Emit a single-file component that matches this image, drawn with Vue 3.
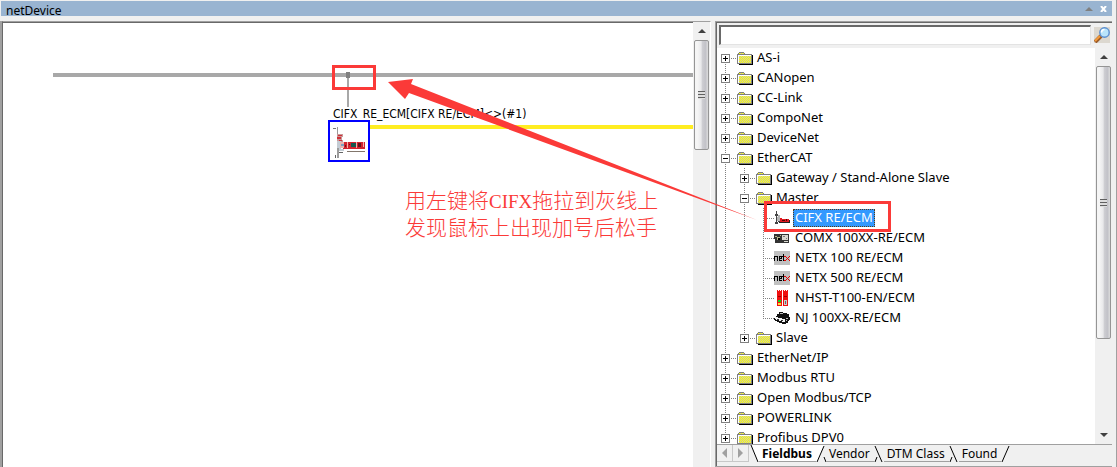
<script setup>
import { ref } from 'vue'

const rows = [
  { level: 0, label: 'AS-i', box: '+', first: true },
  { level: 0, label: 'CANopen', box: '+' },
  { level: 0, label: 'CC-Link', box: '+' },
  { level: 0, label: 'CompoNet', box: '+' },
  { level: 0, label: 'DeviceNet', box: '+' },
  { level: 0, label: 'EtherCAT', box: '-' },
  { level: 1, label: 'Gateway / Stand-Alone Slave', box: '+' },
  { level: 1, label: 'Master', box: '-' },
  { level: 2, label: 'CIFX RE/ECM', icon: 'card' },
  { level: 2, label: 'COMX 100XX-RE/ECM', icon: 'module' },
  { level: 2, label: 'NETX 100 RE/ECM', icon: 'netx' },
  { level: 2, label: 'NETX 500 RE/ECM', icon: 'netx' },
  { level: 2, label: 'NHST-T100-EN/ECM', icon: 'host' },
  { level: 2, label: 'NJ 100XX-RE/ECM', icon: 'box', last: true },
  { level: 1, label: 'Slave', box: '+', last: true },
  { level: 0, label: 'EtherNet/IP', box: '+' },
  { level: 0, label: 'Modbus RTU', box: '+' },
  { level: 0, label: 'Open Modbus/TCP', box: '+' },
  { level: 0, label: 'POWERLINK', box: '+' },
  { level: 0, label: 'Profibus DPV0', box: '+' }
]
const selected = ref('CIFX RE/ECM')
const query = ref('')
const tabs = ['Fieldbus', 'Vendor', 'DTM Class', 'Found']
const edges = ['M1 17L8 1M8 12L10 17', 'M1 1L8 17M1 17L3 12', 'M1 1L8 17M1 17L3 12', 'M1 17L8 1']
const activeTab = ref('Fieldbus')
</script>

<template>
  <div class="window">
    <header class="titlebar">
      <h1>netDevice</h1>
      <button class="win-btn" aria-label="Collapse">
        <svg width="8" height="4" viewBox="0 0 8 4"><path d="M0 4L4 0L8 4Z" fill="#808080" /></svg>
      </button>
      <button class="win-btn close" aria-label="Close">
        <svg width="7" height="6" viewBox="0 0 7 6"><path d="M1 0L6 6M6 0L1 6" stroke="#fff" stroke-width="2" /></svg>
      </button>
    </header>

    <div class="panes">
      <main class="network">
        <div class="canvas">
          <div class="bus"></div>
          <div class="stem"></div>
          <div class="joint"></div>
          <div class="ecat-line"></div>
          <span class="node-label">CIFX_RE_ECM[CIFX RE/ECM]&lt;&gt;(#1)</span>
          <div class="node">
            <svg width="34" height="34" viewBox="0 0 34 34" shape-rendering="crispEdges">
              <path d="M1 4h3" stroke="#777" fill="none" />
              <path d="M5 3h1v10H5z" fill="#999" />
              <path d="M5 10h6v3h-1v3h1v3H5z" fill="#c99a9a" />
              <path d="M6 11h4v1H6zM5 13h4v2H5zM7 16h3v1H7z" fill="#d03038" />
              <path d="M5 17h4v8h3v2H5z" fill="#c4ccd4" />
              <path d="M11 18h22v7H11z" fill="#d3222d" />
              <path d="M8 18h4v6H8z" fill="#e8b4b0" />
              <path d="M9 20h3v2H9z" fill="#78a0c0" />
              <path d="M19 19h5v4h-5z" fill="#16574d" />
              <path d="M26 19h3v4h-3z" fill="#65141a" />
              <path d="M15 18h1v6h-1zM31 18h1v5h-1zM24 18h1v6h-1z" fill="#f2b0aa" />
              <path d="M17 20h1v1h-1zM13 21h1v2h-1z" fill="#701018" />
              <path d="M15 27h18v1H15z" fill="#82766c" />
              <path d="M5 24h2v10H5z" fill="#9c9c9c" />
              <path d="M7 28h4v1H7zM3 31h1v3H3z" fill="#666" />
            </svg>
          </div>
          <div class="drop-mark"></div>
          <p class="note">用左键将<span>CIFX</span>拖拉到灰线上<br>发现鼠标上出现加号后松手</p>
        </div>
        <div class="scrollbar">
          <button class="sb-btn" aria-label="Scroll up"><i class="up"></i></button>
          <div class="thumb short"><i></i></div>
        </div>
      </main>

      <aside class="catalog">
        <form class="search" @submit.prevent>
          <input v-model="query" type="text" aria-label="Search devices">
          <button aria-label="Search">
            <svg width="16" height="16" viewBox="0 0 16 16">
              <path d="M1 15L7 9" stroke="#9a5a28" stroke-width="4" />
              <path d="M1 14L6 9" stroke="#f39a3c" stroke-width="2" />
              <circle cx="10.500" cy="5.500" r="4.700" fill="#b9e4fb" stroke="#5a8ed0" stroke-width="1.400" />
              <path d="M7.500 5.500a3 3 0 0 1 3-3" stroke="#fff" stroke-width="1.600" fill="none" />
            </svg>
          </button>
        </form>

        <div class="tree-wrap">
          <ul class="tree">
            <li v-for="row in rows" :key="row.label" class="row">
              <span v-for="n in row.level" :key="n" class="cell line"></span>
              <span class="cell branch" :class="{ line: !row.last, above: !row.first, first: row.first }">
                <button v-if="row.box" class="toggle" :class="{ plus: row.box === '+' }" :aria-label="'Toggle ' + row.label"></button>
              </span>
              <svg v-if="row.box" class="folder" width="16" height="13" viewBox="0 0 16 13" shape-rendering="crispEdges">
                <defs>
                  <pattern id="weave" width="2" height="2" patternUnits="userSpaceOnUse">
                    <path d="M0 0h2v2H0z" fill="#c8c8b4" />
                    <path d="M1 0h1v1H1zM0 1h1v1H0z" fill="#ff0" />
                  </pattern>
                </defs>
                <path d="M2 12h13V3h1v10H2z" fill="#000" />
                <path d="M0 2h1V1h1V0h5v1h1v1h7v10H0z" fill="#808080" />
                <path d="M1 3h13v8H1z" fill="#fff" />
                <path d="M2 1h5v1H2z" fill="url(#weave)" />
                <path d="M2 4h12v7H2z" fill="url(#weave)" />
              </svg>
              <svg v-else class="leaf-icon" width="16" height="16" viewBox="0 0 16 16" shape-rendering="crispEdges">
                <g v-if="row.icon === 'card'">
                  <path d="M2 1h1v4H2zM1 4h3v2H1zM2 6h1v6H2zM1 12h3v2H1zM4 11h2v1H4z" fill="#444" />
                  <path d="M4 5h2v2H4zM3 7h3v4H3z" fill="#b4b4b4" />
                  <path d="M6 8h2v1h7v3H6z" fill="#e01820" />
                  <path d="M8 10h3v1H8zM12 9h1v2h-1z" fill="#500" />
                  <path d="M5 12h11v1H5zM15 10h1v2h-1z" fill="#222" />
                </g>
                <g v-else-if="row.icon === 'module'">
                  <path d="M0 4h15v9H1V9H0z" fill="#333" />
                  <path d="M8 5h6v5H8zM10 11h4v1h-4z" fill="#d8d8d0" />
                  <path d="M1 6h2v1H1zM3 7h3v3H3zM6 5h1v1H6z" fill="#b8ba8a" />
                  <path d="M4 8h2v2H4z" fill="#000" />
                  <path d="M9 6h2v1H9zM12 8h1v1h-1z" fill="#777" />
                </g>
                <g v-else-if="row.icon === 'netx'">
                  <path d="M0 1h16v14H0z" fill="#c0c0c0" />
                  <path d="M0 6h1v5H0zM1 6h2v1H1zM3 6h1v5H3zM5 6h3v1H5zM5 7h1v4H5zM5 8h3v1H5zM7 7h1v1H7zM6 10h2v1H6zM9 4h1v7H9zM8 6h1v1H8z" fill="#000" />
                  <path d="M10 6h2v1h-2zM10 10h2v1h-2zM12 7h1v1h-1zM12 9h1v1h-1zM13 8h1v1h-1zM14 7h1v1h-1zM14 9h1v1h-1zM15 6h1v1h-1zM15 10h1v1h-1z" fill="#e00000" />
                </g>
                <g v-else-if="row.icon === 'host'">
                  <path d="M3 0h1v1h1V0h1v1h1V0h1v16H3zM9 0h1v1h1V0h1v1h1V0h1v16H9z" fill="#f01010" />
                  <path d="M4 6h3v1H4zM10 6h3v1h-3z" fill="#a00000" />
                  <path d="M4 10h3v2H4z" fill="#00d820" />
                  <path d="M4 13h3v2H4z" fill="#f4e030" />
                  <path d="M10 10h3v5h-3z" fill="#ccc" />
                  <path d="M11 11h1v3h-1z" fill="#666" />
                </g>
                <g v-else>
                  <path d="M5 2h4v1h4v1h2v3h1v3h-1v1h-1v2h-2v1H8v-1H5v-1H3v-1H1v-1H0V8h2V6h1V4h2z" fill="#111" />
                  <path d="M2 7h2v1h4v1h3v3H8v-1H5v-1H2V9H1V8h1z" fill="#f4f4f4" />
                  <path d="M3 9h2v1H3zM7 10h2v1H7z" fill="#333" />
                  <path d="M12 8h2v1h-2zM12 10h1v1h-1zM6 3h3v1H6z" fill="#bbb" />
                </g>
              </svg>
              <button class="label" :class="{ selected: selected === row.label }" @click="selected = row.label">{{ row.label }}</button>
            </li>
          </ul>
          <div class="scrollbar">
            <button class="sb-btn" aria-label="Scroll up"><i class="up"></i></button>
            <div class="thumb"><i></i></div>
            <button class="sb-btn end" aria-label="Scroll down"><i class="down"></i></button>
          </div>
        </div>

        <nav class="tabs">
          <button class="step" aria-label="Previous tab">
            <svg width="5" height="10" viewBox="0 0 5 10"><path d="M5 0V10L0 5Z" fill="#a0a0a0" /></svg>
          </button>
          <button class="step" aria-label="Next tab">
            <svg width="5" height="10" viewBox="0 0 5 10"><path d="M0 0V10L5 5Z" fill="#a0a0a0" /></svg>
          </button>
          <svg class="edge" width="10" height="18" viewBox="0 0 10 18">
            <path d="M2 0H10V17H9Z" fill="#fff" /><path d="M2 0L9 17" class="ink" />
          </svg>
          <template v-for="(tab, i) in tabs" :key="tab">
            <button class="tab" :class="{ active: tab === activeTab }" @click="activeTab = tab">{{ tab }}</button>
            <svg class="edge" width="10" height="18" viewBox="0 0 10 18">
              <path v-if="i === 0" d="M0 0H8L1 17H0Z" fill="#fff" /><path :d="edges[i]" class="ink" />
            </svg>
          </template>
        </nav>

        <div class="pick-mark"></div>
      </aside>
    </div>

    <svg class="arrow" width="370" height="142" viewBox="0 0 370 142">
      <path d="M0 3L25 0L23 5L369 141L21 14L17 20Z" fill="#fb3a38" />
    </svg>
  </div>
</template>

<style>
body { background: #f0f0f0; }
</style>

<style scoped>
* { box-sizing: border-box; }
.window {
  position: relative;
  display: flex;
  flex-direction: column;
  height: 100vh;
  overflow: hidden;
  padding: 1px 0 0 2px;
  background: #f0f0f0;
  border-right: 1px solid #a0a0a0;
  color: #000;
  font: 12px/20px "Noto Sans", "Open Sans", sans-serif;
}
button { padding: 0; border: 0; background: none; font: inherit; color: inherit; }
svg { display: block; flex: none; }
.titlebar {
  display: flex;
  align-items: center;
  height: 15px;
  margin: 0 4px 0 -1px;
  padding: 0 5px;
  background: #99b4d1;
}
h1 { flex: 1; margin: 0; padding-top: 5px; font-size: 12px; font-weight: 400; line-height: 16px; }
.win-btn { display: flex; justify-content: center; width: 12px; }
.win-btn.close { width: 12px; justify-content: flex-end; }
.panes { flex: 1; display: flex; gap: 4px; min-height: 0; margin: 5px 4px 0 0; }
.network {
  flex: 1;
  display: flex;
  min-width: 0;
  border-top: 1px solid #a0a0a0;
  border-right: 1px solid #fff;
  border-left: 1px solid #696969;
  box-shadow: -2px 0 #a0a0a0;
  background: #fff;
}
.canvas { position: relative; flex: 1; border-top: 1px solid #696969; overflow: hidden; }
.bus { position: absolute; top: 50px; left: 50px; right: 0; height: 4px; background: #a8a8a8; }
.stem { position: absolute; top: 54px; left: 344px; width: 2px; height: 48px; background: #a8a8a8; }
.joint { position: absolute; top: 49px; left: 343px; width: 4px; height: 6px; background: #808080; }
.ecat-line { position: absolute; top: 102px; left: 362px; right: 0; height: 4px; background: #ffed21; }
.node-label {
  position: absolute;
  top: 84px;
  left: 329px;
  padding: 0 1px;
  background: #fff;
  font: 12px/15px "DejaVu Sans Condensed", "Noto Sans", sans-serif;
  white-space: nowrap;
}
.node { position: absolute; top: 97px; left: 325px; padding: 2px; border: 2px solid #00f; background: #fff; }
.drop-mark { position: absolute; top: 42px; left: 329px; width: 44px; height: 25px; border: 3px solid #fb3a38; }
.note {
  position: absolute;
  top: 163px;
  left: 402px;
  margin: 0;
  color: #fb3a38;
  font: 300 21px/27px "Noto Sans CJK SC", sans-serif;
  white-space: nowrap;
}
.note span { font-family: "Liberation Serif", serif; font-size: 19px; line-height: 1px; }
.scrollbar {
  flex: none;
  display: flex;
  flex-direction: column;
  width: 17px;
  padding: 0 1px;
  background: #f0f0f0;
}
.sb-btn { display: flex; align-items: center; justify-content: center; flex: none; height: 18px; }
.sb-btn.end { margin-top: auto; }
.sb-btn i { width: 0; height: 0; border: 4px solid transparent; }
.sb-btn .up { border-top: 0; border-bottom-color: #404040; }
.sb-btn .down { border-bottom: 0; border-top-color: #404040; }
.thumb {
  display: flex;
  align-items: center;
  justify-content: center;
  height: 273px;
  border: 1px solid #959595;
  border-radius: 2px;
  background: linear-gradient(90deg, #f5f5f5 0 20%, #e8e8ea 48%, #cfcfd3 54%, #c2c2c8 80%, #dcdcdc);
}
.thumb.short { height: 110px; }
.thumb i {
  width: 7px;
  height: 8px;
  background: repeating-linear-gradient(#606060 0 1px, #ddd 1px 3px);
}
.catalog {
  position: relative;
  display: flex;
  flex-direction: column;
  flex: 0 1 397px;
  min-width: 0;
  margin-bottom: 1px;
  border-top: 1px solid #a0a0a0;
  border-left: 1px solid #a0a0a0;
  box-shadow: inset 1px 1px #696969, 0 1px #a0a0a0;
}
.search { display: flex; gap: 3px; height: 26px; padding: 3px 2px 0 3px; }
.search input {
  flex: 1;
  min-width: 0;
  height: 20px;
  border: 1px solid #e3e3e3;
  border-top: 2px solid #696969;
  border-left: 2px solid #696969;
  outline: 0;
  background: #fff;
}
.search button { width: 16px; height: 16px; margin-top: 2px; background: #dcd8d0; }
.tree-wrap { flex: 1; display: flex; min-height: 0; margin-left: 1px; border-bottom: 1px solid #a0a0a0; background: #fff; }
.tree { flex: 1; min-width: 0; margin: 0; padding: 0; overflow: hidden; list-style: none; font-size: 13px; }
.row { display: flex; align-items: center; height: 20px; }
.cell {
  --down: repeating-linear-gradient(#808080 0 1px, #fff 1px 2px);
  --across: repeating-linear-gradient(90deg, #808080 0 1px, #fff 1px 2px) 8px 10px / 11px 1px no-repeat;
  position: relative;
  flex: none;
  display: flex;
  align-items: center;
  width: 19px;
  height: 20px;
  padding-left: 4px;
}
.line { background: var(--down) 8px 0 / 1px 20px no-repeat; }
.branch { background: var(--across); }
.branch.above { background: var(--down) 8px 0 / 1px 11px no-repeat, var(--across); }
.branch.line.above { background: var(--down) 8px 0 / 1px 20px no-repeat, var(--across); }
.branch.line.first { background: var(--down) 8px 10px / 1px 10px no-repeat, var(--across); }
.toggle {
  width: 9px;
  height: 9px;
  margin-top: 1px;
  border: 1px solid #808080;
  background: linear-gradient(#000, #000) 1px 3px / 5px 1px no-repeat #fff;
}
.toggle.plus {
  background:
    linear-gradient(#000, #000) 1px 3px / 5px 1px no-repeat,
    linear-gradient(#000, #000) 3px 1px / 1px 5px no-repeat #fff;
}
.folder { margin-left: 1px; }
.label { height: 18px; margin-left: 2px; padding: 0 2px 2px; line-height: 16px; white-space: nowrap; }
.leaf-icon + .label { margin-left: 3px; }
.label.selected { background: #39f; color: #fff; outline: 1px dotted #5a3a10; outline-offset: -1px; }
.tabs { display: flex; height: 18px; margin: 0 0 3px 1px; }
.step { display: flex; align-items: center; justify-content: center; width: 16px; height: 17px; border: 1px solid #c8c8c8; border-width: 0 1px 1px 0; }
.tab { height: 17px; padding: 0 4px 0 3px; line-height: 15px; white-space: nowrap; border-bottom: 1px solid #a0a0a0; }
.tab.active { background: #fff; font-weight: 700; }
.ink { fill: none; stroke: #000; }
.pick-mark { position: absolute; top: 179px; left: 48px; width: 127px; height: 31px; border: 3px solid #fb3a38; }
.arrow { position: absolute; top: 79px; left: 388px; pointer-events: none; }
</style>
